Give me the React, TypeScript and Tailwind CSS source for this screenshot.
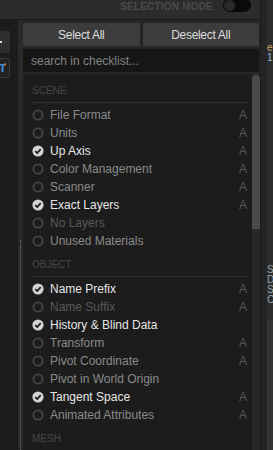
import React from "react";

type Item = { label: string; state: "on" | "off" | "dim"; auto?: boolean };

const sections: { title: string; items: Item[] }[] = [
  {
    title: "SCENE",
    items: [
      { label: "File Format", state: "off", auto: true },
      { label: "Units", state: "off", auto: true },
      { label: "Up Axis", state: "on", auto: true },
      { label: "Color Management", state: "off", auto: true },
      { label: "Scanner", state: "off", auto: true },
      { label: "Exact Layers", state: "on", auto: true },
      { label: "No Layers", state: "dim" },
      { label: "Unused Materials", state: "off" },
    ],
  },
  {
    title: "OBJECT",
    items: [
      { label: "Name Prefix", state: "on", auto: true },
      { label: "Name Suffix", state: "dim", auto: true },
      { label: "History & Blind Data", state: "on" },
      { label: "Transform", state: "off", auto: true },
      { label: "Pivot Coordinate", state: "off", auto: true },
      { label: "Pivot in World Origin", state: "off" },
      { label: "Tangent Space", state: "on", auto: true },
      { label: "Animated Attributes", state: "off", auto: true },
    ],
  },
  { title: "MESH", items: [] },
];

function CheckIcon({ on }: { on: boolean }) {
  if (on)
    return (
      <svg width="12" height="12" viewBox="0 0 12 12" className="shrink-0">
        <circle cx="6" cy="6" r="5.6" fill="#d2d2d2" />
        <path d="M3.3 6.2 L5.2 8 L8.7 4.2" fill="none" stroke="#1c1c1c" strokeWidth="1.7" />
      </svg>
    );
  return (
    <svg width="12" height="12" viewBox="0 0 12 12" className="shrink-0">
      <circle cx="6" cy="6" r="4.6" fill="none" stroke="#454545" strokeWidth="1.8" />
    </svg>
  );
}

function Row({ item }: { item: Item }) {
  const color =
    item.state === "on" ? "text-[#e6e6e6]" : item.state === "dim" ? "text-[#595959]" : "text-[#8a8a8a]";
  return (
    <div className="flex items-center h-[18px]">
      <CheckIcon on={item.state === "on"} />
      <span className={`ml-[6px] flex-1 whitespace-nowrap ${color}`}>{item.label}</span>
      {item.auto && <span className="text-[#555] pr-[1px]">A</span>}
    </div>
  );
}

export default function App() {
  return (
    <div
      className="w-[273px] h-[450px] overflow-hidden flex bg-[#1c1c1c] text-[12px] leading-[18px]"
      style={{ fontFamily: '"Liberation Sans", Arial, sans-serif' }}
    >
      {/* left + main */}
      <div className="w-[260px] flex flex-col">
        {/* top bar */}
        <div className="h-[20px] shrink-0 bg-[#2c2c2c] border-b border-[#1a1a1a] flex items-start justify-end pr-[9px]">
          <span className="mt-[2px] text-[10px] leading-[10px] font-bold text-[#4a4a4a] tracking-[0.2px]">
            SELECTION MODE
          </span>
          <div className="ml-[10px] -mt-[2px] w-[28px] h-[14px] rounded-full bg-[#0b0b0b] flex items-center pl-[1px]">
            <div className="w-[11px] h-[11px] rounded-full bg-[#2a2a2a]" />
          </div>
        </div>

        <div className="flex flex-1 min-h-0">
          {/* left tool column */}
          <div className="w-[18px] shrink-0 bg-[#1c1c1c] flex flex-col pt-[11px]">
            <div className="w-[10px] h-[22px] bg-[#2e2e2e] relative">
              <div className="absolute left-0 top-[10px] w-[2px] h-[2px] bg-[#ddd]" />
            </div>
            <div className="mt-[5px] w-[10px] h-[20px] rounded-r-[3px] border border-l-0 border-[#3a3a3a] bg-[#222] flex items-center">
              <svg width="6" height="10" viewBox="0 0 6 10">
                <rect x="0" y="1" width="5" height="1.5" fill="#3a8fd8" />
                <rect x="1.5" y="1" width="2" height="8" fill="#3a8fd8" />
                <rect x="4" y="0.5" width="2" height="2" fill="#d86a2a" />
              </svg>
            </div>
          </div>

          {/* divider */}
          <div className="w-[5px] shrink-0 bg-[#2a2a2a] flex justify-center">
            <div className="mt-[220px] h-full w-0 border-l border-dotted border-[#6a6a6a]" />
          </div>

          {/* main panel */}
          <div className="w-[237px] shrink-0 bg-[#262626] flex flex-col pt-[3px]">
            <div className="flex gap-[3px] pr-[1px]">
              <button className="flex-1 h-[23px] rounded-t-[2px] bg-[#3c3c3c] text-[#dcdcdc] text-[12px] tracking-[-0.3px]">
                Select All
              </button>
              <button className="flex-1 h-[23px] rounded-t-[2px] bg-[#3c3c3c] text-[#dcdcdc] text-[12px] tracking-[-0.3px]">
                Deselect All
              </button>
            </div>
            <div className="mt-[3px] mr-[1px] h-[23px] bg-[#161616] flex items-center pl-[8px] text-[#858585]">
              search in checklist...
            </div>
            <div className="mt-[1px] flex flex-1 min-h-0 border-t border-[#2c2c2c] bg-[#1c1c1c]">
              <div className="flex-1 pl-[9px] pr-[4px] pt-[11px]">
                {sections.map((s, i) => (
                  <div key={s.title} className={i > 0 ? "mt-[9px]" : ""}>
                    <div className="text-[10px] leading-[12px] text-[#464646] pb-[5px] border-b border-[#303030]">
                      {s.title}
                    </div>
                    <div className="pt-[3px]">
                      {s.items.map((it) => (
                        <Row key={it.label} item={it} />
                      ))}
                    </div>
                  </div>
                ))}
              </div>
              {/* scrollbar */}
              <div className="w-[8px] shrink-0 bg-[#282828]">
                <div className="mt-[1px] h-[154px] rounded-t-full bg-[#4a4a4a]" />
              </div>
            </div>
          </div>
        </div>
      </div>

      {/* right edge of neighbouring panel */}
      <div className="w-[13px] flex">
        <div className="w-[7px] bg-[#242424] border-l border-[#1a1a1a]" />
        <div className="w-[6px] bg-[#2c2c2c] overflow-hidden text-[10px] leading-[10px] flex flex-col">
          <span className="mt-[43px] text-[#c9a36a]">e</span>
          <span className="text-[#8fb2d0]">1</span>
          <span className="mt-[202px] text-[#9aa4ad]">S</span>
          <span className="text-[#9aa4ad]">D</span>
          <span className="text-[#9aa4ad]">S</span>
          <span className="text-[#9aa4ad]">C</span>
          <div className="mt-[15px] flex-1 bg-[#333]" />
        </div>
      </div>
    </div>
  );
}
